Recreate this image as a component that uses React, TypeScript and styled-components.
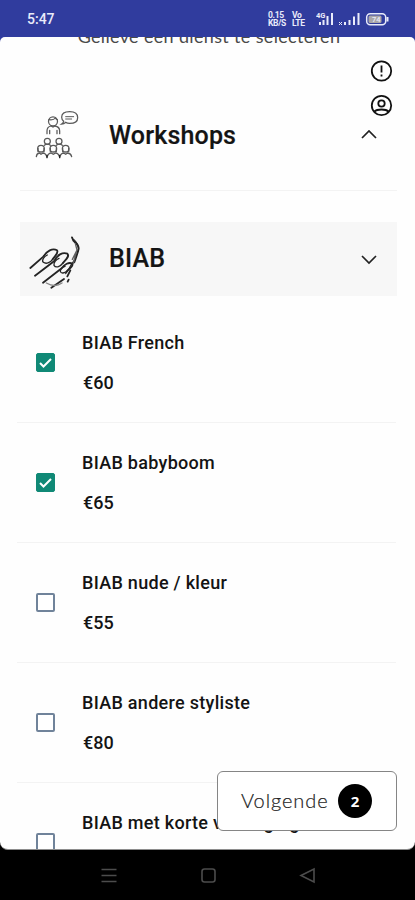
import React from "react";
import styled, { createGlobalStyle } from "styled-components";

const GlobalStyle = createGlobalStyle`
  * { box-sizing: border-box; }
  body { margin: 0; background: #000; font-family: Roboto, sans-serif; color: #141414; }
`;

const Phone = styled.div`
  position: relative;
  width: 415px;
  height: 900px;
  display: flex;
  flex-direction: column;
  overflow: hidden;
  background: #000;
`;

const StatusBar = styled.header`
  flex: 0 0 37px;
  display: flex;
  align-items: center;
  justify-content: space-between;
  padding: 1px 25px 0 27px;
  background: #303c9e;
  color: #e9ebfa;
`;

const Clock = styled.span`
  font-size: 14px;
  font-weight: 500;
  line-height: 16px;
`;

const Indicators = styled.div`
  display: flex;
  align-items: center;
`;

const StackedLabel = styled.div<{ $width: number; $gap: number }>`
  width: ${(p) => p.$width}px;
  margin-right: ${(p) => p.$gap}px;
  display: flex;
  flex-direction: column;
  font-size: 8.5px;
  font-weight: 700;
  line-height: 8px;
  letter-spacing: -0.3px;
  white-space: nowrap;
`;

const ScreenBackdrop = styled.div`
  flex: 0 0 813px;
  background: linear-gradient(#303c9e 50%, #000 50%);
`;

const Screen = styled.main`
  height: 813px;
  overflow: hidden;
  background: #fefefe;
  border-radius: 5px 5px 8px 8px;
  border-bottom: 1px solid #8d8d8d;
`;

const Prompt = styled.div`
  height: 9px;
  display: flex;
  align-items: flex-end;
  justify-content: center;
  padding-left: 3px;
  overflow: hidden;
  font-family: Lato, sans-serif;
  font-size: 18px;
  line-height: 19px;
  letter-spacing: 0.34px;
  color: #4a4a4a;
  white-space: nowrap;
`;

const Category = styled.section<{ $open?: boolean }>`
  height: ${(p) => (p.$open ? 74 : 145)}px;
  margin: 0 18px 0 20px;
  padding-top: ${(p) => (p.$open ? 0 : 33)}px;
  display: flex;
  align-items: ${(p) => (p.$open ? "center" : "flex-start")};
  background: ${(p) => (p.$open ? "#f7f7f7" : "transparent")};
  border-bottom: ${(p) => (p.$open ? "none" : "1px solid #f3f3f3")};
`;

const CategoryArt = styled.div<{ $indent: number; $offset: number }>`
  width: 89px;
  margin-top: ${(p) => p.$offset}px;
  padding-left: ${(p) => p.$indent}px;
  display: flex;
`;

const CategoryName = styled.h2<{ $offset?: number }>`
  flex: 1;
  margin: ${(p) => p.$offset ?? 0}px 0 0;
  font-size: 25px;
  line-height: 30px;
  font-weight: 500;
  letter-spacing: 0.18px;
  -webkit-text-stroke: 0.2px #141414;
`;

const Chevron = styled.svg<{ $offset?: number }>`
  width: 18px;
  height: 12px;
  margin: ${(p) => p.$offset ?? 0}px 19px 0 0;
  fill: none;
  stroke: #222;
  stroke-width: 1.7;
`;

const CategoryGap = styled.div`
  height: 31px;
`;

const ServiceList = styled.ul`
  list-style: none;
  margin: 0;
  padding: 7px 19px 0 17px;
`;

const ServiceRow = styled.li`
  height: 120px;
  display: flex;
  align-items: center;
  border-bottom: 1px solid #f3f3f3;
`;

const CheckBox = styled.span<{ $checked: boolean }>`
  flex: 0 0 19px;
  height: 19px;
  margin: 0 27px 0 19px;
  display: flex;
  align-items: center;
  justify-content: center;
  border: ${(p) => (p.$checked ? "1px solid #108976" : "2px solid #70839a")};
  border-radius: 2px;
  background: ${(p) => (p.$checked ? "#108976" : "#fff")};
`;

const ServiceText = styled.div`
  display: flex;
  flex-direction: column;
  gap: 20px;
  padding-top: 1px;
  font-size: 18px;
  font-weight: 500;
  line-height: 20px;
  white-space: nowrap;
`;

const ServiceName = styled.span`
  letter-spacing: 0.29px;
`;

const ServicePrice = styled.span`
  padding-left: 1px;
`;

const FloatingTools = styled.div`
  position: absolute;
  left: 370px;
  top: 59px;
  display: flex;
  flex-direction: column;
  gap: 12px;
`;

const ToolIcon = styled.svg`
  width: 23px;
  height: 23px;
  fill: none;
  stroke: #111;
  stroke-width: 1.8;
`;

const NextButton = styled.button`
  position: absolute;
  left: 217px;
  top: 771px;
  width: 180px;
  height: 60px;
  display: flex;
  align-items: center;
  gap: 10px;
  padding: 0 0 0 23px;
  border: 1px solid #858585;
  border-radius: 6px;
  background: #fff;
  font-family: Lato, sans-serif;
  color: #222;
`;

const NextLabel = styled.span`
  width: 87px;
  margin-top: -2px;
  font-size: 20px;
  font-weight: 300;
  letter-spacing: 0.9px;
  text-align: left;
  -webkit-text-stroke: 0.2px #222;
`;

const CountBadge = styled.span`
  width: 34px;
  height: 34px;
  display: flex;
  align-items: center;
  justify-content: center;
  border-radius: 50%;
  background: #000;
  color: #fff;
  font-family: "Open Sans", sans-serif;
  font-size: 15px;
  font-weight: 700;
`;

const NavBar = styled.nav`
  flex: 1;
  display: flex;
  justify-content: space-between;
  align-items: center;
  padding: 0 99px 0 100px;
`;

const NavIcon = styled.svg`
  width: 17px;
  height: 17px;
  fill: none;
  stroke: #4c4c4c;
  stroke-width: 1.6;
`;

const services = [
  { name: "BIAB French", price: "€60", checked: true },
  { name: "BIAB babyboom", price: "€65", checked: true },
  { name: "BIAB nude / kleur", price: "€55", checked: false },
  { name: "BIAB andere styliste", price: "€80", checked: false },
  { name: "BIAB met korte verlenging", price: "", checked: false },
];

const SignalIcons = () => (
  <svg width="74" height="16" viewBox="0 0 74 16" fill="#e9ebfa">
    <text x="0" y="7" fontSize="7.5" fontWeight="700" fontFamily="Roboto">4G</text>
    <path d="M3 11h2v3H3zM6.500 9h2v5h-2zM10.500 5h2v9h-2zM15 2h2v12h-2z" />
    <path d="M23 11l3 3m0-3l-3 3" stroke="#e9ebfa" strokeWidth="1" />
    <path d="M28 11h2v3h-2zM32.500 9h2v5h-2zM37 5.500h2v8.500h-2zM41.500 2h2v12h-2z" />
    <rect x="50.700" y="2.700" width="19" height="11" rx="3.500" fill="none" stroke="#e9ebfa" strokeWidth="1.500" />
    <rect x="52.500" y="4.500" width="13" height="7.500" rx="1.500" fill="#aaa6a8" />
    <path d="M70.500 6h2v4.500h-2z" />
    <text x="56" y="11" fontSize="7.500" fontFamily="Roboto" fontWeight="500">74</text>
  </svg>
);

const WorkshopArt = () => (
  <svg width="54" height="58" viewBox="0 0 162 174" fill="none" stroke="#5a5a5a" strokeWidth="3.8" strokeLinecap="round">
    <circle cx="69" cy="49" r="13.500" />
    <path d="M57 44q14 2 19-5 3 5 6 5M51 86v-8q0-13 12-15l6 3 6-3q14 2 14 15v8M59 86V76M81 86V76" />
    <path d="M95 57q5-3 6-8-6-5-6-12 0-17 24-17t24 18q0 17-24 17-7 0-12-3-5 5-12 5z" />
    <path d="M107 35h24M107 42h18" strokeWidth="3" />
    <circle cx="52" cy="109" r="9" />
    <circle cx="87" cy="109" r="9" />
    <circle cx="33" cy="131" r="10" />
    <circle cx="70" cy="131" r="10" />
    <circle cx="107" cy="131" r="10" />
    <path d="M43 121q9-7 18 0M79 121q9-7 18 0" />
    <path d="M19 155q1-10 9-11l5 4 6-4q9 1 12 13 3-12 12-13l7 4 7-4q9 1 12 13 3-12 12-13l6 4 6-4q10 1 12 11" />
    <path d="M24 140v-10M42 140v-10M61 140v-10M79 140v-10M98 140v-10M116 140v-10" />
    <path d="M51 151v7M89 151v7" stroke="#222" strokeWidth="4" />
  </svg>
);

const HandArt = () => (
  <svg width="60" height="60" viewBox="0 0 180 180" fill="none" stroke="#242424" strokeWidth="5.5" strokeLinecap="round" strokeLinejoin="round">
    <path d="M13 108L52 74C62 57 80 47 93 55C99 62 87 71 80 82" />
    <path d="M27 131L84 88C93 69 110 59 124 65C132 73 119 83 111 93" />
    <path d="M51 152L107 109C115 97 129 89 139 95C143 103 132 109 124 116" />
    <path d="M76 167L114 141" />
    <path d="M80 82C72 93 60 97 52 91C46 86 54 73 64 69" strokeWidth="4" />
    <path d="M111 93C101 106 89 108 84 100C82 92 91 82 99 79" strokeWidth="4" />
    <path d="M124 116C115 125 105 125 103 118C103 111 110 105 117 103" strokeWidth="4" />
    <path d="M138 16L142 26C150 34 159 39 158 50C154 67 149 79 145 91" />
    <path d="M143 22C153 31 160 43 156 56C151 74 146 85 136 98C130 106 127 117 119 125" strokeWidth="3.500" />
    <path d="M148 35L153 54L139 82M151 60L142 94" stroke="#606060" strokeWidth="4" />
    <path d="M133 115L124 133M128 143L125 149" />
    <path d="M61 153Q87 168 108 153" stroke="#858585" strokeWidth="4" />
  </svg>
);

export default function App() {
  return (
    <>
      <GlobalStyle />
      <Phone>
        <StatusBar>
          <Clock>5:47</Clock>
          <Indicators>
            <StackedLabel $width={17} $gap={7}>
              <span>0.15</span>
              <span>KB/S</span>
            </StackedLabel>
            <StackedLabel $width={15} $gap={9}>
              <span>Vo</span>
              <span>LTE</span>
            </StackedLabel>
            <SignalIcons />
          </Indicators>
        </StatusBar>
        <ScreenBackdrop>
          <Screen>
            <Prompt>Gelieve een dienst te selecteren</Prompt>
            <Category>
              <CategoryArt $indent={10} $offset={26}><WorkshopArt /></CategoryArt>
              <CategoryName $offset={42}>Workshops</CategoryName>
              <Chevron $offset={49} viewBox="0 0 18 12"><path d="M2 10l7-7 7 7" /></Chevron>
            </Category>
            <CategoryGap />
            <Category $open>
              <CategoryArt $indent={6} $offset={6}><HandArt /></CategoryArt>
              <CategoryName>BIAB</CategoryName>
              <Chevron viewBox="0 0 18 12"><path d="M2 3l7 7 7-7" /></Chevron>
            </Category>
            <ServiceList>
              {services.map((service) => (
                <ServiceRow key={service.name}>
                  <CheckBox $checked={service.checked}>
                    {service.checked && (
                      <svg width="15" height="13" viewBox="0 0 15 13" fill="none" stroke="#fff" strokeWidth="2">
                        <path d="M2 7l3.500 3.500L13 3" />
                      </svg>
                    )}
                  </CheckBox>
                  <ServiceText>
                    <ServiceName>{service.name}</ServiceName>
                    <ServicePrice>{service.price || "\u00a0"}</ServicePrice>
                  </ServiceText>
                </ServiceRow>
              ))}
            </ServiceList>
          </Screen>
        </ScreenBackdrop>
        <NavBar>
          <NavIcon viewBox="0 0 17 17"><path d="M1.500 2.500h15M1.500 8.500h15M1.500 14.500h15" /></NavIcon>
          <NavIcon viewBox="0 0 17 17"><rect x="2" y="2" width="13" height="13" rx="2.500" /></NavIcon>
          <NavIcon viewBox="0 0 17 17"><path d="M2 8.500L15 2v13z" /></NavIcon>
        </NavBar>
        <FloatingTools>
          <ToolIcon viewBox="0 0 23 23">
            <circle cx="11.500" cy="12" r="9.700" />
            <path d="M11.500 6.500v7M11.500 15.500v2" />
          </ToolIcon>
          <ToolIcon viewBox="0 0 23 23">
            <circle cx="11.500" cy="11.500" r="9.700" />
            <circle cx="11.500" cy="9.500" r="3.200" />
            <path d="M4.500 17.500q2-2 7-2t7 2" />
          </ToolIcon>
        </FloatingTools>
        <NextButton>
          <NextLabel>Volgende</NextLabel>
          <CountBadge>2</CountBadge>
        </NextButton>
      </Phone>
    </>
  );
}
